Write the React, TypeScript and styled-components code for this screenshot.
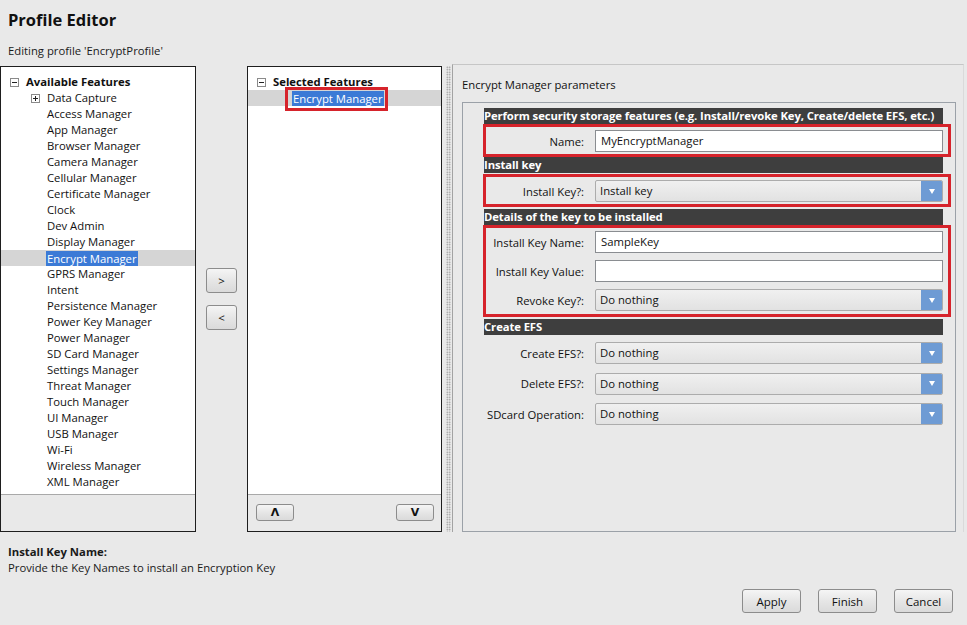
import React from "react";
import styled, { createGlobalStyle } from "styled-components";

const GlobalStyle = createGlobalStyle`
  html, body { margin: 0; padding: 0; background: #e9e9e9; }
  body {
    font-family: "Open Sans", "Noto Sans", "DejaVu Sans", sans-serif;
    font-size: 11.3px;
    color: #1a1a1a;
  }
  * { box-sizing: border-box; }
`;

const Page = styled.div`
  width: 967px;
  height: 625px;
  overflow: hidden;
  display: flex;
  flex-direction: column;
  background: #e9e9e9;
`;

const Title = styled.h1`
  margin: 9px 0 0 8px;
  font-size: 16.5px;
  font-weight: 700;
  line-height: 22px;
  color: #111;
`;

const Subtitle = styled.div`
  margin: 12px 0 0 8px;
  line-height: 16px;
`;

const Main = styled.div`
  display: flex;
  height: 468px;
  margin-top: 5px;
`;

const TreePanel = styled.div<{ $w: number }>`
  width: ${(p) => p.$w}px;
  height: 466px;
  margin-top: 2px;
  border: 1px solid #1e1e1e;
  display: flex;
  flex-direction: column;
  background: #e9e9e9;
  flex-shrink: 0;
`;

const TreeList = styled.div`
  flex: 1;
  background: #fff;
  border-bottom: 1px solid #a9a9a9;
  padding-top: 7px;
`;

const TreeFooter = styled.div`
  height: 36px;
  display: flex;
  justify-content: space-between;
  align-items: flex-start;
  padding: 9px 7px 0 8px;
`;

const Row = styled.div<{ $indent: number; $selected?: boolean }>`
  height: 16px;
  line-height: 16px;
  display: flex;
  align-items: center;
  padding-left: ${(p) => p.$indent}px;
  background: ${(p) => (p.$selected ? "#d5d5d5" : "transparent")};
  white-space: nowrap;
  color: #111;
`;

const HeaderText = styled.span`
  font-weight: 700;
`;

const ExpandBox = styled.span`
  width: 9px;
  height: 9px;
  border: 1px solid #8a8a8a;
  background: #fff;
  position: relative;
  margin-right: 7px;
  flex-shrink: 0;
  &::before {
    content: "";
    position: absolute;
    left: 1px;
    right: 1px;
    top: 3px;
    height: 1px;
    background: #222;
  }
`;

const PlusBox = styled(ExpandBox)`
  &::after {
    content: "";
    position: absolute;
    top: 1px;
    bottom: 1px;
    left: 3px;
    width: 1px;
    background: #222;
  }
`;

const Highlight = styled.span<{ $annotated?: boolean }>`
  background: #3b7ad6;
  color: #fff;
  padding: 0 1px;
  line-height: 15px;
  position: relative;
  ${(p) =>
    p.$annotated
      ? `&::after {
    content: "";
    position: absolute;
    left: -7px;
    right: -4px;
    top: -4px;
    bottom: -5px;
    border: 3px solid #d6232b;
  }`
      : ""}
`;

const ButtonColumn = styled.div`
  width: 51px;
  flex-shrink: 0;
  display: flex;
  flex-direction: column;
  align-items: center;
  padding-top: 204px;
  gap: 12px;
`;

const Btn = styled.button<{ $w: number; $h: number }>`
  width: ${(p) => p.$w}px;
  height: ${(p) => p.$h}px;
  border: 1px solid #8c8c8c;
  border-radius: 3px;
  background: linear-gradient(#f5f5f5, #e6e6e6 50%, #dadada);
  font-family: "Open Sans", "Noto Sans", sans-serif;
  font-size: 11.5px;
  color: #111;
  padding: 0;
  display: flex;
  align-items: center;
  justify-content: center;
  cursor: default;
`;

const Arrow = styled.span`
  font-family: "DejaVu Sans", sans-serif;
  font-size: 11px;
  font-weight: 700;
  line-height: 1;
`;

const Splitter = styled.div`
  width: 10px;
  height: 466px;
  margin-top: 2px;
  flex-shrink: 0;
  padding-left: 4px;
  &::before {
    content: "";
    display: block;
    width: 5px;
    height: 100%;
    background-image: radial-gradient(circle, #8d8d8d 0.7px, transparent 0.9px);
    background-size: 2.5px 2.5px;
  }
`;

const RightPanel = styled.div`
  width: 512px;
  flex-shrink: 0;
  border-top: 1px solid #c6c6c6;
  border-left: 1px solid #a3a3a3;
  border-right: 1px solid #dadada;
  padding: 12px 7px 0 9px;
  display: flex;
  flex-direction: column;
`;

const PanelTitle = styled.div`
  line-height: 16px;
  color: #111;
`;

const GroupBox = styled.div`
  flex: 1;
  margin-top: 9px;
  border: 1px solid #9ba1a8;
  padding: 5px 12px 0 21px;
  display: flex;
  flex-direction: column;
`;

const SectionHeader = styled.div<{ $mt?: number }>`
  height: 16px;
  line-height: 16px;
  background: #3e3e3e;
  color: #fff;
  font-weight: 700;
  white-space: nowrap;
  overflow: hidden;
  margin-top: ${(p) => p.$mt ?? 0}px;
  letter-spacing: -0.1px;
`;

const RedBox = styled.div<{ $mt?: number; $pb?: number }>`
  border: 3px solid #d6232b;
  margin: ${(p) => p.$mt ?? 0}px -8px 0 -1px;
  padding: 3px 5px ${(p) => p.$pb ?? 2}px 1px;
  display: flex;
  flex-direction: column;
  gap: 7px;
`;

const Rows = styled.div`
  margin-top: 7px;
  display: flex;
  flex-direction: column;
  gap: 8.5px;
`;

const FieldRow = styled.div`
  display: grid;
  grid-template-columns: 1fr 348px;
  align-items: center;
  height: 22px;
`;

const Label = styled.div`
  text-align: right;
  padding-right: 11px;
  white-space: nowrap;
  color: #111;
`;

const TextBox = styled.div`
  height: 22px;
  border: 1px solid #8a8d91;
  background: #fff;
  padding-left: 5px;
  line-height: 20px;
  color: #111;
`;

const SelectBox = styled.div`
  height: 22px;
  border: 1px solid #acacac;
  border-radius: 2px;
  background: linear-gradient(#f0f0f0, #e2e2e2);
  display: flex;
  align-items: stretch;
  color: #111;
`;

const SelectText = styled.div`
  flex: 1;
  padding-left: 4px;
  line-height: 20px;
`;

const SelectArrow = styled.div`
  width: 21px;
  background: #6e9bd4;
  border-radius: 0 1px 1px 0;
  display: flex;
  align-items: center;
  justify-content: center;
  &::before {
    content: "";
    border-left: 3.5px solid transparent;
    border-right: 3.5px solid transparent;
    border-top: 5px solid #fff;
  }
`;

const Help = styled.div`
  margin: 12px 0 0 8px;
  line-height: 16px;
`;

const HelpTitle = styled.div`
  font-weight: 700;
`;

const Actions = styled.div`
  margin-top: 13px;
  display: flex;
  justify-content: flex-end;
  gap: 17px;
  padding-right: 14px;
`;

const available = [
  "Access Manager",
  "App Manager",
  "Browser Manager",
  "Camera Manager",
  "Cellular Manager",
  "Certificate Manager",
  "Clock",
  "Dev Admin",
  "Display Manager",
  "Encrypt Manager",
  "GPRS Manager",
  "Intent",
  "Persistence Manager",
  "Power Key Manager",
  "Power Manager",
  "SD Card Manager",
  "Settings Manager",
  "Threat Manager",
  "Touch Manager",
  "UI Manager",
  "USB Manager",
  "Wi-Fi",
  "Wireless Manager",
  "XML Manager",
];

const Field: React.FC<{ label: string; value?: string; select?: boolean }> = ({
  label,
  value = "",
  select,
}) => (
  <FieldRow>
    <Label>{label}</Label>
    {select ? (
      <SelectBox>
        <SelectText>{value}</SelectText>
        <SelectArrow />
      </SelectBox>
    ) : (
      <TextBox>{value}</TextBox>
    )}
  </FieldRow>
);

export default function App() {
  return (
    <Page>
      <GlobalStyle />
      <Title>Profile Editor</Title>
      <Subtitle>Editing profile 'EncryptProfile'</Subtitle>
      <Main>
        <TreePanel $w={196}>
          <TreeList>
            <Row $indent={9}>
              <ExpandBox />
              <HeaderText>Available Features</HeaderText>
            </Row>
            <Row $indent={30}>
              <PlusBox />
              <span>Data Capture</span>
            </Row>
            {available.map((name) =>
              name === "Encrypt Manager" ? (
                <Row key={name} $indent={45} $selected>
                  <Highlight>{name}</Highlight>
                </Row>
              ) : (
                <Row key={name} $indent={46}>
                  {name}
                </Row>
              )
            )}
          </TreeList>
          <TreeFooter />
        </TreePanel>
        <ButtonColumn>
          <Btn $w={31} $h={25}>&gt;</Btn>
          <Btn $w={31} $h={25}>&lt;</Btn>
        </ButtonColumn>
        <TreePanel $w={195}>
          <TreeList>
            <Row $indent={9}>
              <ExpandBox />
              <HeaderText>Selected Features</HeaderText>
            </Row>
            <Row $indent={44} $selected>
              <Highlight $annotated>Encrypt Manager</Highlight>
            </Row>
          </TreeList>
          <TreeFooter>
            <Btn $w={38} $h={17}>
              <Arrow>Λ</Arrow>
            </Btn>
            <Btn $w={38} $h={17}>
              <Arrow>V</Arrow>
            </Btn>
          </TreeFooter>
        </TreePanel>
        <Splitter />
        <RightPanel>
          <PanelTitle>Encrypt Manager parameters</PanelTitle>
          <GroupBox>
            <SectionHeader>
              Perform security storage features (e.g. Install/revoke Key, Create/delete EFS, etc.)
            </SectionHeader>
            <RedBox>
              <Field label="Name:" value="MyEncryptManager" />
            </RedBox>
            <SectionHeader>Install key</SectionHeader>
            <RedBox $mt={1}>
              <Field label="Install Key?:" value="Install key" select />
            </RedBox>
            <SectionHeader $mt={2}>Details of the key to be installed</SectionHeader>
            <RedBox $pb={3}>
              <Field label="Install Key Name:" value="SampleKey" />
              <Field label="Install Key Value:" />
              <Field label="Revoke Key?:" value="Do nothing" select />
            </RedBox>
            <SectionHeader $mt={2}>Create EFS</SectionHeader>
            <Rows>
              <Field label="Create EFS?:" value="Do nothing" select />
              <Field label="Delete EFS?:" value="Do nothing" select />
              <Field label="SDcard Operation:" value="Do nothing" select />
            </Rows>
          </GroupBox>
        </RightPanel>
      </Main>
      <Help>
        <HelpTitle>Install Key Name:</HelpTitle>
        <div>Provide the Key Names to install an Encryption Key</div>
      </Help>
      <Actions>
        <Btn $w={59} $h={24}>Apply</Btn>
        <Btn $w={59} $h={24}>Finish</Btn>
        <Btn $w={59} $h={24}>Cancel</Btn>
      </Actions>
    </Page>
  );
}
